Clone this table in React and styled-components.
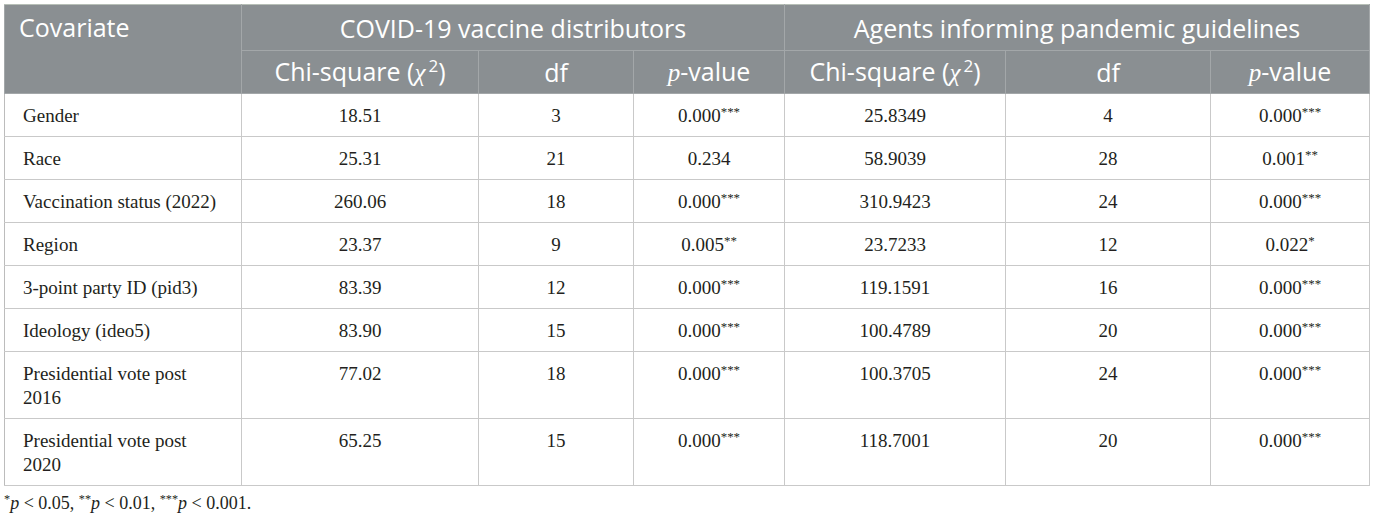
import styled, { createGlobalStyle } from 'styled-components';

const rows = [
  { name: "Gender", v: ["18.51", "3", "0.000***", "25.8349", "4", "0.000***"] },
  { name: "Race", v: ["25.31", "21", "0.234", "58.9039", "28", "0.001**"] },
  { name: "Vaccination status (2022)", v: ["260.06", "18", "0.000***", "310.9423", "24", "0.000***"] },
  { name: "Region", v: ["23.37", "9", "0.005**", "23.7233", "12", "0.022*"] },
  { name: "3-point party ID (pid3)", v: ["83.39", "12", "0.000***", "119.1591", "16", "0.000***"] },
  { name: "Ideology (ideo5)", v: ["83.90", "15", "0.000***", "100.4789", "20", "0.000***"] },
  { name: "Presidential vote post 2016", v: ["77.02", "18", "0.000***", "100.3705", "24", "0.000***"] },
  { name: "Presidential vote post 2020", v: ["65.25", "15", "0.000***", "118.7001", "20", "0.000***"] }
];

const widths = [237, 237, 155, 151, 221, 205, 159];

const splitStars = (s) => {
  const m = s.match(/^([^*]*)(\**)$/);
  return [m[1], m[2]];
};

const Value = ({ text }) => {
  const [num, stars] = splitStars(text);
  return (
    <>
      {num}
      {stars && <Stars>{stars}</Stars>}
    </>
  );
};

const SubHeads = () => (
  <>
    <SubHead>Chi-square (<MathI>χ</MathI><Sup>2</Sup>)</SubHead>
    <SubHead>df</SubHead>
    <SubHead><MathI>p</MathI>-value</SubHead>
  </>
);

const App = () => {
  return (
    <Page>
      <GlobalStyle />
      <Table>
        <colgroup>
          {widths.map((w, i) => <col key={i} style={{ width: w }} />)}
        </colgroup>
        <thead>
          <tr>
            <HeadCell rowSpan={2} $left>Covariate</HeadCell>
            <HeadCell colSpan={3}>COVID-19 vaccine distributors</HeadCell>
            <HeadCell colSpan={3}>Agents informing pandemic guidelines</HeadCell>
          </tr>
          <tr>
            <SubHeads />
            <SubHeads />
          </tr>
        </thead>
        <tbody>
          {rows.map((r) => (
            <tr key={r.name}>
              <NameCell>{r.name}</NameCell>
              {r.v.map((x, i) => (
                <Cell key={i}><Value text={x} /></Cell>
              ))}
            </tr>
          ))}
        </tbody>
      </Table>
      <Note>
        <Stars>*</Stars><MathI>p</MathI> &lt; 0.05, <Stars>**</Stars><MathI>p</MathI> &lt; 0.01, <Stars>***</Stars><MathI>p</MathI> &lt; 0.001.
      </Note>
    </Page>
  );
};

const GlobalStyle = createGlobalStyle`
  body {
    margin: 0;
    background: #ffffff;
  }
`;

const Page = styled.div`
  padding: 4px 5px 0 4px;
  font-family: "Liberation Serif", "DejaVu Serif", serif;
  color: #231f20;
`;

const Table = styled.table`
  width: 1366px;
  table-layout: fixed;
  border-collapse: collapse;
  border: 1px solid #b7bfb7;
`;

const HeadCell = styled.th`
  background: #8a8f92;
  color: #ffffff;
  font-family: "Open Sans", "Noto Sans", sans-serif;
  font-weight: 400;
  font-size: 25px;
  line-height: 28px;
  height: 45px;
  padding: 0 14px;
  text-align: ${(p) => (p.$left ? 'left' : 'center')};
  vertical-align: ${(p) => (p.$left ? 'top' : 'middle')};
  padding-top: ${(p) => (p.$left ? '8px' : '0')};
  border: 1px solid #a3a7a9;
  border-top-color: #b7bfb7;
`;

const SubHead = styled.th`
  background: #8a8f92;
  color: #ffffff;
  font-family: "Open Sans", "Noto Sans", sans-serif;
  font-weight: 400;
  font-size: 25px;
  line-height: 28px;
  height: 42px;
  padding: 0 8px;
  text-align: center;
  border: 1px solid #a3a7a9;
`;

const MathI = styled.i`
  font-family: "Liberation Serif", "DejaVu Serif", serif;
  font-style: italic;
`;

const Sup = styled.sup`
  font-size: 0.68em;
  line-height: 0;
  vertical-align: 0.55em;
  margin-left: 3px;
`;

const Stars = styled.sup`
  font-size: 0.68em;
  line-height: 0;
  vertical-align: 0.5em;
`;

const Cell = styled.td`
  font-size: 19px;
  line-height: 24px;
  padding: 10px 10px 8px;
  text-align: center;
  vertical-align: top;
  border: 1px solid #c9c9c9;
  border-left-color: #bcbcbc;
`;

const NameCell = styled(Cell)`
  text-align: left;
  padding-left: 18px;
  padding-right: 22px;
`;

const Note = styled.div`
  font-size: 18px;
  line-height: 22px;
  margin-top: 6px;
  color: #231f20;
`;

export default App;
